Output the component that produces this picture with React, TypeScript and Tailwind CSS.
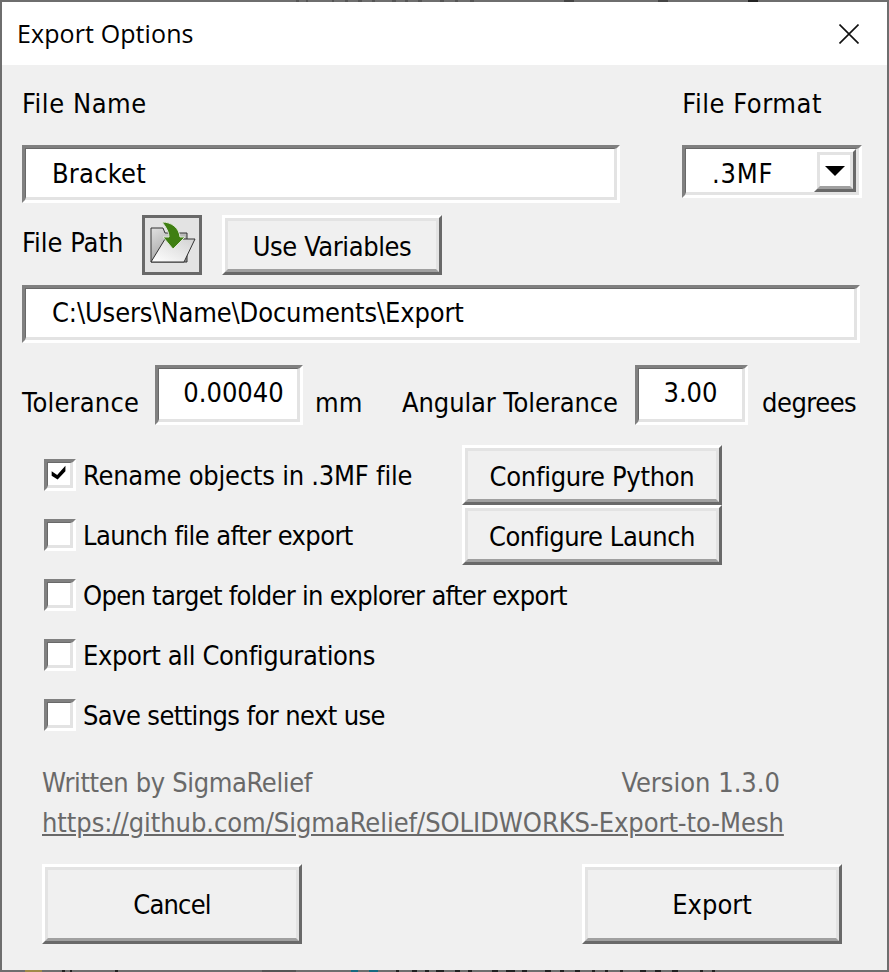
import type { ReactNode } from 'react'

type BoxProps = {
  className?: string
  children?: ReactNode
}

function Raised({ className = '', children }: BoxProps) {
  return (
    <div className={`border-[3px] border-t-white border-l-white border-r-[#696969] border-b-[#696969] ${className}`}>
      <div className="flex h-full w-full items-center justify-center border-[3px] border-t-[#e3e3e3] border-l-[#e3e3e3] border-r-[#e3e3e3] border-b-[#a0a0a0] text-black">
        {children}
      </div>
    </div>
  )
}

function Sunken({ className = '', children }: BoxProps) {
  return (
    <div className={`border-[3px] border-t-[#808080] border-l-[#808080] border-r-white border-b-white ${className}`}>
      <div className="flex h-full w-full border-t border-r-[3px] border-b-[3px] border-l border-t-[#696969] border-r-[#e3e3e3] border-b-[#e3e3e3] border-l-[#696969] bg-white">
        {children}
      </div>
    </div>
  )
}

function CheckRow({
  label,
  checked = false,
  className = '',
  textClass = '',
}: {
  label: string
  checked?: boolean
  className?: string
  textClass?: string
}) {
  return (
    <div className={`flex h-[32px] items-center ${className}`}>
      <Sunken className="h-[32px] w-[32px] shrink-0">
        {checked && (
          <svg viewBox="0 0 24 24" className="h-full w-full">
            <path d="M4 9 L10 13 L19 3 L19 9 L10.5 18 L4 14 Z" fill="#000" />
          </svg>
        )}
      </Sunken>
      <span className={`ml-[7px] whitespace-nowrap ${textClass}`}>{label}</span>
    </div>
  )
}

function FolderIcon() {
  return (
    <svg viewBox="0 0 48 48" className="h-[48px] w-[48px] shrink-0">
      <defs>
        <linearGradient id="back" x1="0" y1="0" x2="0.6" y2="1">
          <stop offset="0" stopColor="#e0e0e0" />
          <stop offset="1" stopColor="#9a9a9a" />
        </linearGradient>
        <linearGradient id="front" x1="0" y1="1" x2="1" y2="0">
          <stop offset="0" stopColor="#ffffff" />
          <stop offset="1" stopColor="#d2d2d2" />
        </linearGradient>
      </defs>
      <path d="M3 7 H15 L17 12 H39 V41 H3 Z" fill="url(#back)" stroke="#333" strokeWidth="1" />
      <path d="M3 41 L17 18 H47 L36 41 Z" fill="url(#front)" stroke="#333" strokeWidth="1" />
      <path
        d="M14 1 C24 1 31 7 32 16 L37 16 L25 28 L15 16 L21 16 C21 11 18 6 14 1 Z"
        fill="#3f7f12"
        stroke="#dfe8d8"
        strokeWidth="1"
      />
    </svg>
  )
}

// bits of whatever sits behind the dialog, showing through the 2px window edge
function EdgeBits({ className = '', bits }: { className?: string; bits: [number, number, string][] }) {
  return (
    <svg viewBox="0 0 889 2" className={`absolute left-0 h-[2px] w-[889px] ${className}`}>
      {bits.map(([x, w, fill]) => (
        <rect key={x} x={x} y={0} width={w} height={2} fill={fill} />
      ))}
    </svg>
  )
}

const topBits: [number, number, string][] = [
  [296, 3, '#555'],
  [306, 2, '#555'],
  [332, 2, '#555'],
  [345, 3, '#555'],
  [358, 4, '#555'],
  [372, 3, '#555'],
  [392, 4, '#555'],
  [405, 3, '#555'],
  [418, 4, '#555'],
  [440, 4, '#555'],
  [455, 3, '#555'],
  [470, 4, '#555'],
  [564, 10, '#444'],
  [658, 10, '#444'],
  [748, 10, '#222'],
]

const bottomBits: [number, number, string][] = [
  [25, 17, '#a08a48'],
  [62, 3, '#222'],
  [70, 2, '#222'],
  [115, 3, '#222'],
  [262, 34, '#555'],
  [351, 7, '#176a80'],
  [369, 9, '#176a80'],
  [396, 3, '#222'],
  [412, 5, '#222'],
  [425, 4, '#222'],
  [436, 8, '#222'],
  [455, 5, '#222'],
  [468, 4, '#222'],
  [492, 6, '#222'],
  [506, 9, '#222'],
  [522, 5, '#222'],
  [545, 6, '#222'],
  [560, 4, '#222'],
  [575, 5, '#222'],
  [592, 3, '#222'],
  [605, 3, '#222'],
  [620, 3, '#222'],
  [640, 6, '#222'],
  [655, 6, '#222'],
  [672, 6, '#222'],
  [700, 3, '#222'],
  [712, 3, '#222'],
]

export default function App() {
  return (
    <div className="relative h-[972px] w-[889px] overflow-hidden bg-white font-['DejaVu_Sans_Condensed','DejaVu_Sans',sans-serif] text-[27px] leading-none text-black [font-stretch:condensed]">
      <div className="flex h-[972px] w-[889px] flex-col border-2 border-[#6e6e6e] bg-[#f0f0f0]">
        <div className="flex h-[63px] shrink-0 items-center justify-between bg-white pr-[27px] pl-[15px]">
          <span className="font-['Open_Sans',sans-serif] text-[25px] tracking-[0.1px] [font-stretch:normal]">Export Options</span>
          <svg viewBox="0 0 20 20" className="mr-[1px] h-[20px] w-[20px]" fill="none" stroke="#111" strokeWidth="1.6">
            <path d="M0.5 0.5 L19.5 19.5 M19.5 0.5 L0.5 19.5" />
          </svg>
        </div>

        <div className="flex flex-col pl-[20px]">
          <div className="mt-[24px] flex h-[28px] items-center justify-between pr-[65px]">
            <span className="tracking-[0.55px]">File Name</span>
            <span className="tracking-[0.55px]">File Format</span>
          </div>

          <div className="mt-[28px] flex items-start">
            <Sunken className="h-[58px] w-[598px]">
              <span className="mt-[11px] ml-[26px] tracking-[0.2px]">Bracket</span>
            </Sunken>
            <Sunken className="ml-[62px] h-[53px] w-[180px]">
              <span className="mt-[11px] ml-[26px] flex-1 tracking-[0.8px]">.3MF</span>
              <Raised className="h-full w-[42px]">
                <svg viewBox="0 0 20 10" className="h-[10px] w-[20px]">
                  <path d="M0 0 H20 L10 10 Z" fill="#000" />
                </svg>
              </Raised>
            </Sunken>
          </div>

          <div className="mt-[12px] flex items-center">
            <span className="mb-[6px] w-[120px]">File Path</span>
            <button className="flex h-[60px] w-[60px] items-center justify-center border-[3px] border-[#696969] bg-[#e3e3e3]">
              <FolderIcon />
            </button>
            <Raised className="ml-[20px] h-[60px] w-[220px]">
              <span className="pt-[3px] tracking-[-0.4px]">Use Variables</span>
            </Raised>
          </div>

          <Sunken className="mt-[10px] h-[58px] w-[838px]">
            <span className="mt-[10px] ml-[26px] tracking-[-0.13px]">C:\Users\Name\Documents\Export</span>
          </Sunken>

          <div className="mt-[22px] flex h-[60px] items-center pt-[14px]">
            <span className="w-[133px] tracking-[0.2px]">Tolerance</span>
            <Sunken className="mt-[-14px] h-[60px] w-[148px]">
              <span className="mt-[10px] w-full pl-[11px] text-center">0.00040</span>
            </Sunken>
            <span className="ml-[12px] w-[87px]">mm</span>
            <span className="w-[233px] tracking-[-0.1px]">Angular Tolerance</span>
            <Sunken className="mt-[-14px] h-[60px] w-[113px]">
              <span className="mt-[10px] w-full text-center">3.00</span>
            </Sunken>
            <span className="ml-[14px] tracking-[-0.5px]">degrees</span>
          </div>

          <div className="mt-[20px] flex pl-[22px]">
            <div className="flex w-[418px] flex-col pt-[14px]">
              <CheckRow label="Rename objects in .3MF file" checked textClass="tracking-[-0.22px]" />
              <CheckRow label="Launch file after export" className="mt-[28px]" textClass="tracking-[-0.6px]" />
            </div>
            <div className="flex flex-col">
              <Raised className="h-[60px] w-[260px]">
                <span className="pt-[3px] tracking-[-0.3px]">Configure Python</span>
              </Raised>
              <Raised className="h-[60px] w-[260px]">
                <span className="pt-[3px] tracking-[-0.45px]">Configure Launch</span>
              </Raised>
            </div>
          </div>

          <div className="flex flex-col pl-[22px]">
            <CheckRow label="Open target folder in explorer after export" className="mt-[14px]" textClass="tracking-[-0.7px]" />
            <CheckRow label="Export all Configurations" className="mt-[28px]" textClass="tracking-[-0.35px]" />
            <CheckRow label="Save settings for next use" className="mt-[28px]" textClass="tracking-[-0.6px]" />
          </div>

          <div className="mt-[38px] flex w-[760px] justify-between pl-[20px] text-[#696969]">
            <span className="tracking-[-0.36px]">Written by SigmaRelief</span>
            <span className="mr-[2px]">Version 1.3.0</span>
          </div>
          <span className="mt-[13px] pl-[20px] tracking-[-0.05px] text-[#696969] underline">https://github.com/SigmaRelief/SOLIDWORKS-Export-to-Mesh</span>

          <div className="mt-[28px] flex w-[820px] justify-between pl-[20px]">
            <Raised className="h-[80px] w-[260px]">
              <span className="pt-[1px] tracking-[-0.8px]">Cancel</span>
            </Raised>
            <Raised className="h-[80px] w-[260px]">
              <span className="pt-[1px]">Export</span>
            </Raised>
          </div>
        </div>
      </div>
      <EdgeBits className="top-0" bits={topBits} />
      <EdgeBits className="bottom-0" bits={bottomBits} />
    </div>
  )
}
